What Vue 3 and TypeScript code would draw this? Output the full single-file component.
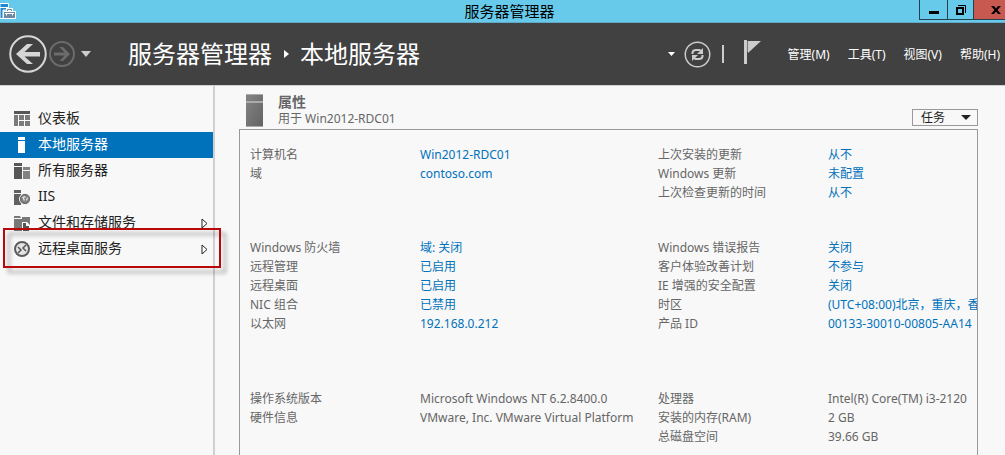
<script setup lang="ts">
interface Row {
  label: string
  value: string
  link?: boolean
}

interface NavItem {
  icon: string
  label: string
  expandable?: boolean
}

const navItems: NavItem[] = [
  { icon: 'dashboard', label: '仪表板' },
  { icon: 'server', label: '本地服务器' },
  { icon: 'servers', label: '所有服务器' },
  { icon: 'iis', label: 'IIS' },
  { icon: 'files', label: '文件和存储服务', expandable: true },
  { icon: 'remote', label: '远程桌面服务', expandable: true },
]
const selected = 'server'
const highlighted = 'remote'

const menus: string[] = ['管理(M)', '工具(T)', '视图(V)', '帮助(H)']

const groups: { left: Row[]; right: Row[] }[] = [
  {
    left: [
      { label: '计算机名', value: 'Win2012-RDC01', link: true },
      { label: '域', value: 'contoso.com', link: true },
    ],
    right: [
      { label: '上次安装的更新', value: '从不', link: true },
      { label: 'Windows 更新', value: '未配置', link: true },
      { label: '上次检查更新的时间', value: '从不', link: true },
    ],
  },
  {
    left: [
      { label: 'Windows 防火墙', value: '域: 关闭', link: true },
      { label: '远程管理', value: '已启用', link: true },
      { label: '远程桌面', value: '已启用', link: true },
      { label: 'NIC 组合', value: '已禁用', link: true },
      { label: '以太网', value: '192.168.0.212', link: true },
    ],
    right: [
      { label: 'Windows 错误报告', value: '关闭', link: true },
      { label: '客户体验改善计划', value: '不参与', link: true },
      { label: 'IE 增强的安全配置', value: '关闭', link: true },
      { label: '时区', value: '(UTC+08:00)北京，重庆，香', link: true },
      { label: '产品 ID', value: '00133-30010-00805-AA14', link: true },
    ],
  },
  {
    left: [
      { label: '操作系统版本', value: 'Microsoft Windows NT 6.2.8400.0' },
      { label: '硬件信息', value: 'VMware, Inc. VMware Virtual Platform' },
    ],
    right: [
      { label: '处理器', value: 'Intel(R) Core(TM) i3-2120' },
      { label: '安装的内存(RAM)', value: '2 GB' },
      { label: '总磁盘空间', value: '39.66 GB' },
    ],
  },
]
</script>

<template>
  <div class="window">
    <header class="titlebar">
      <svg class="app-icon" width="16" height="20" viewBox="0 0 16 20" aria-hidden="true">
        <path d="M0 3.5H8.5V10H3V18.5H0Z" fill="#1e88d2" stroke="#fff" />
        <path d="M0 7.5H8" stroke="#fff" />
        <path d="M7.5 11V9.5H11.5V11" fill="none" stroke="#fff" stroke-width="3" />
        <rect x="3.5" y="11.5" width="12" height="7" fill="#6c8ba3" stroke="#fff" />
        <path d="M7.5 11V9.5H11.5V11" fill="none" stroke="#6c8ba3" />
        <path d="M5 13.500H14M6.500 13V15.500M12.500 13V15.500" stroke="#fff" />
      </svg>
      <h1 class="window-title">服务器管理器</h1>
      <div class="window-buttons">
        <button class="wbtn minimize" type="button" aria-label="最小化">
          <svg width="12" height="12" viewBox="0 0 12 12"><path d="M1 7H11V10H1Z" /></svg>
        </button>
        <button class="wbtn restore" type="button" aria-label="还原">
          <svg width="12" height="12" viewBox="0 0 12 12">
            <path d="M1 3H9V11H1ZM3 5V9H7V5Z" fill-rule="evenodd" />
            <path d="M3 1.500H10.500V9" fill="none" stroke="#000" />
          </svg>
        </button>
        <button class="wbtn close" type="button" aria-label="关闭">
          <svg width="10" height="10" viewBox="0 0 10 10">
            <path d="M0 1H3L5 3.500L7 1H10L6.500 5L10 9H7L5 6.500L3 9H0L3.500 5Z" />
          </svg>
        </button>
      </div>
    </header>

    <div class="toolbar">
      <button class="tool" type="button" aria-label="后退">
        <svg width="38" height="38" viewBox="0 0 38 38">
          <circle cx="19" cy="19" r="17.750" fill="none" stroke="#d6d6d6" stroke-width="2" />
          <path d="M7 19L18 9H24L15.500 17H31V21.500H15.500L24 29H18Z" fill="#d6d6d6" />
        </svg>
      </button>
      <button class="tool forward" type="button" aria-label="前进">
        <svg width="26" height="26" viewBox="0 0 26 26">
          <circle cx="13" cy="13" r="12" fill="none" stroke="#6c6c6c" stroke-width="2" />
          <path d="M21 13L14 6H10.500L15.500 11.500H5V14.500H15.500L10.500 20H14Z" fill="#6c6c6c" />
        </svg>
      </button>
      <button class="tool history" type="button" aria-label="历史记录">
        <svg width="12" height="8" viewBox="0 0 12 8"><path d="M1 1H11L6 7Z" fill="#ccc" /></svg>
      </button>

      <nav class="breadcrumb" aria-label="路径">
        <span>服务器管理器</span>
        <svg width="8" height="10" viewBox="0 0 8 10" aria-hidden="true">
          <path d="M2 1L7 5L2 9Z" fill="#fff" />
        </svg>
        <span>本地服务器</span>
      </nav>

      <div class="actions">
        <button class="tool" type="button" aria-label="选项">
          <svg width="8" height="6" viewBox="0 0 8 6"><path d="M0 1H7L3.500 5Z" fill="#fff" /></svg>
        </button>
        <button class="tool refresh" type="button" aria-label="刷新">
          <svg width="27" height="27" viewBox="0 0 27 27">
            <circle cx="13.500" cy="13.500" r="12.250" fill="none" stroke="#ccc" stroke-width="1.500" />
            <g fill="none" stroke="#ccc" stroke-width="2">
              <path d="M8.500 13V11.500Q9 9 12 9H15.500L17.500 10.500" />
              <path d="M18.500 14V15.500Q18 18 15 18H11.500L9.500 16.500" />
            </g>
            <path d="M19 7V13H13Z" fill="#ccc" />
            <path d="M8 20V14H14Z" fill="#ccc" />
          </svg>
        </button>
        <span class="divider"></span>
        <button class="tool flag" type="button" aria-label="通知">
          <svg width="18" height="28" viewBox="0 0 18 28">
            <path d="M0 0H3V24H0Z" fill="#ccc" />
            <path d="M4 1H17L4 13Z" fill="#ccc" />
            <path d="M3.500 1V12" stroke="#777" />
          </svg>
        </button>
        <button v-for="menu in menus" :key="menu" class="menu" type="button">{{ menu }}</button>
      </div>
    </div>

    <div class="body">
      <nav class="sidebar" aria-label="服务器管理器">
        <div v-for="item in navItems" :key="item.icon" class="nav-row">
          <a href="#" class="nav-item" :class="{ selected: item.icon === selected }">
            <svg class="nav-icon" width="16" height="16" viewBox="0 0 16 16" aria-hidden="true">
              <template v-if="item.icon === 'dashboard'">
                <path d="M0 0H16V3H0Z" fill="#575757" />
                <path d="M0 4H4V15H0ZM5 4H10V9H5ZM11 4H16V9H11ZM5 10H10V15H5ZM11 10H16V15H11Z" fill="#7b7b7b" />
              </template>
              <template v-else-if="item.icon === 'server'">
                <path d="M4 0H11V3H4ZM4 4H11V16H4Z" fill="#fff" />
              </template>
              <template v-else-if="item.icon === 'servers'">
                <path d="M0 0H8V3H0ZM0 4H8V16H0Z" fill="#575757" />
                <path d="M9 4H16V7H9ZM9 8H16V16H9Z" fill="#828282" />
              </template>
              <template v-else-if="item.icon === 'iis'">
                <path d="M0 1H7V4H0ZM0 5H7V16H0Z" fill="#616161" />
                <circle cx="11" cy="10" r="5.500" fill="#808080" stroke="#f8f8f8" />
                <circle cx="11" cy="10" r="4.500" fill="none" stroke="#666" />
                <path d="M8 8L11 7L12 8L10 9L11 11L10 12ZM13 8L14 9L13 12L12 11Z" fill="#e2e2e2" />
              </template>
              <template v-else-if="item.icon === 'files'">
                <path d="M0 1H6L7 3H0ZM0 4H8V2H16V16H0Z" fill="#787878" />
                <path d="M8 7H13L16 10V16H8Z" fill="#f8f8f8" />
                <path d="M9 8H12V11H15V16H9Z" fill="#555" />
              </template>
              <template v-else>
                <circle cx="8" cy="8" r="7" fill="#e4e4e4" stroke="#5c5c5c" stroke-width="2" />
                <path d="M4 6L7 9L4 12M12 4L9 7L12 10" fill="none" stroke="#555" stroke-width="1.500" />
              </template>
            </svg>
            <span class="nav-label">{{ item.label }}</span>
            <svg v-if="item.expandable" width="7" height="12" viewBox="0 0 7 12" aria-hidden="true">
              <path d="M1 2L6 6.500L1 11Z" fill="#fff" stroke="#222" />
            </svg>
          </a>
          <span v-if="item.icon === highlighted" class="callout"></span>
        </div>
      </nav>

      <main class="content">
        <div class="section-head">
          <svg width="17" height="33" viewBox="0 0 17 33" aria-hidden="true">
            <defs>
              <linearGradient id="tower" x1="0" y1="0" x2="1" y2="1">
                <stop offset="0" stop-color="#858585" />
                <stop offset="1" stop-color="#626262" />
              </linearGradient>
            </defs>
            <rect width="17" height="33" fill="url(#tower)" />
            <path d="M0 0H17V1H0ZM0 7H17V9H0ZM0 32H17V33H0Z" fill="#aaa" />
          </svg>
          <div class="section-title">
            <h2>属性</h2>
            <p>用于 Win2012-RDC01</p>
          </div>
          <button class="tasks" type="button">
            任务
            <svg width="10" height="6" viewBox="0 0 10 6" aria-hidden="true"><path d="M0 0H10L5 5Z" fill="#222" /></svg>
          </button>
        </div>

        <div class="panel">
          <div v-for="(group, i) in groups" :key="i" class="group">
            <dl v-for="(rows, side) in group" :key="side">
              <div v-for="row in rows" :key="row.label" class="row">
                <dt>{{ row.label }}</dt>
                <dd>
                  <a v-if="row.link" href="#">{{ row.value }}</a>
                  <template v-else>{{ row.value }}</template>
                </dd>
              </div>
            </dl>
          </div>
        </div>
      </main>
    </div>
  </div>
</template>

<style>
body {
  margin: 0;
}
</style>

<style scoped>
.window {
  display: flex;
  flex-direction: column;
  height: 100vh;
  overflow: hidden;
  background: #f8f8f8;
  color: #666;
  font: 12px/19px "Noto Sans", "Noto Sans CJK SC", sans-serif;
  white-space: nowrap;
}

button {
  margin: 0;
  padding: 0;
  border: 0;
  background: none;
  color: inherit;
  font: inherit;
}

a {
  color: #0072bc;
  text-decoration: none;
}

svg {
  display: block;
  flex: none;
}

h1,
h2,
p,
dl,
dd {
  margin: 0;
}

.titlebar {
  display: grid;
  grid-template-columns: 100px 1fr 86px;
  flex: none;
  height: 22px;
  border-bottom: 1px solid #62a9c8;
  background: #67caeb;
  color: #000;
}

.window-title {
  font-size: 15px;
  font-weight: 400;
  line-height: 22px;
  text-align: center;
}

.window-buttons {
  display: flex;
  height: 20px;
}

.wbtn {
  display: flex;
  align-items: center;
  justify-content: center;
  box-sizing: border-box;
  width: 28px;
  border: 1px solid #24414c;
  border-top: 0;
  border-right: 0;
}

.restore {
  width: 26px;
}

.close {
  flex: 1;
  justify-content: flex-end;
  padding-right: 4px;
  background: #c75950;
}

.toolbar {
  display: flex;
  align-items: center;
  flex: none;
  height: 62px;
  padding: 0 5px 0 9px;
  border-bottom: 1px solid #d0d0d0;
  background: #414141;
  color: #fff;
}

.forward {
  margin-left: 2px;
}

.history {
  margin-left: 5px;
}

.breadcrumb {
  display: flex;
  align-items: center;
  gap: 10px;
  margin-left: 36px;
  font-size: 24px;
  line-height: 32px;
}

.actions {
  display: flex;
  align-items: center;
  margin-left: auto;
}

.refresh {
  margin-left: 8px;
}

.divider {
  width: 2px;
  height: 18px;
  margin-left: 11px;
  background: #ccc;
}

.flag {
  margin: 0 8px 0 20px;
}

.menu {
  margin-left: 18px;
}

.body {
  display: flex;
  flex: 1;
  min-height: 0;
}

.sidebar {
  flex: none;
  width: 213px;
  padding-top: 20px;
  border-right: 2px solid #d0d0d0;
}

.nav-row {
  position: relative;
}

.nav-item {
  display: flex;
  align-items: center;
  gap: 8px;
  height: 26px;
  padding: 0 5px 0 14px;
  color: #222;
  font-size: 14px;
}

.nav-item.selected {
  background: #0072bc;
  color: #fff;
}

.nav-label {
  flex: 1;
  line-height: 24px;
  padding-bottom: 2px;
}

.callout {
  position: absolute;
  inset: -8px -8px -6px 3px;
  border: 2px solid #b80808;
  filter: drop-shadow(5px 5px 2px rgba(0, 0, 0, 0.35));
  pointer-events: none;
}

.content {
  display: flex;
  flex: 1;
  flex-direction: column;
  min-width: 0;
  padding: 8px 27px 0 24px;
}

.section-head {
  display: flex;
  flex: none;
  height: 35px;
  padding-left: 7px;
}

.section-title {
  flex: 1;
  margin-left: 15px;
}

.section-title h2 {
  font-size: 14px;
  line-height: 16px;
}

.section-title p {
  line-height: 17px;
}

.tasks {
  display: flex;
  align-items: center;
  justify-content: space-between;
  box-sizing: border-box;
  width: 66px;
  height: 17px;
  margin-top: 15px;
  padding: 0 6px 0 8px;
  border: 1px solid #999;
  color: #222;
}

.panel {
  flex: 1;
  min-height: 0;
  padding: 15px 0 0 10px;
  overflow: hidden;
  border: 1px solid #999;
  border-bottom: 0;
}

.group {
  display: grid;
  grid-template-columns: minmax(0, 408fr) minmax(0, 319fr);
  margin-bottom: 36px;
}

.group + .group {
  margin-bottom: 56px;
}

.row {
  display: grid;
  grid-template-columns: 170px minmax(0, 1fr);
}
</style>
